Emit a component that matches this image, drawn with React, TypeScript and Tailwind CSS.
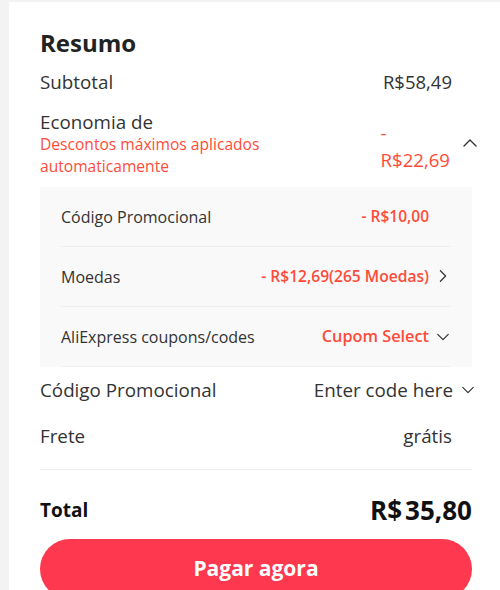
import React from "react";

const Chevron = ({ dir, className = "" }: { dir: "up" | "down" | "right"; className?: string }) => {
  const d =
    dir === "up" ? "M2 10l6-6 6 6" : dir === "down" ? "M2 5l6 6 6-6" : "M5 2l6 6-6 6";
  return (
    <svg className={className} viewBox="0 0 16 16" fill="none" stroke="currentColor" strokeWidth={1.4}>
      <path d={d} strokeLinecap="round" strokeLinejoin="round" />
    </svg>
  );
};

const App = () => {
  const promos = [
    { label: "Código Promocional", value: "- R$10,00", icon: null as null | "right" | "down", size: "text-[15.5px]" },
    { label: "Moedas", value: "- R$12,69(265 Moedas)", icon: "right" as const, size: "text-[15.6px]" },
    { label: "AliExpress coupons/codes", value: "Cupom Select", icon: "down" as const, size: "text-[16.3px]" },
  ];

  return (
    <div
      className="min-h-[590px] bg-[#f3f3f3] pl-[9px] pt-[2px] text-[#333]"
      style={{ fontFamily: '"Open Sans", Arial, sans-serif' }}
    >
      <div className="bg-white pl-[31px] pr-[28px] pt-[25px] pb-4">
        {/* Header */}
        <h2 className="text-[24px] leading-[32px] font-bold text-[#222]">Resumo</h2>

        <div className="flex h-[46px] items-center justify-between pr-[20px] text-[18.8px]">
          <span>Subtotal</span>
          <span className="text-[18.5px]">R$58,49</span>
        </div>

        {/* Economia */}
        <div className="mt-[6px] flex items-center justify-between">
          <div>
            <div className="text-[18.8px] leading-[22px]">Economia de</div>
            <div className="text-[15.6px] leading-[22px] text-[#ff4b3a]">
              Descontos máximos aplicados
              <br />
              automaticamente
            </div>
          </div>
          <div className="flex items-center">
            <div className="pt-[4px] text-[18.6px] leading-[27px] text-[#ff4b3a]">
              <div>-</div>
              <div>R$22,69</div>
            </div>
            <Chevron dir="up" className="ml-[12px] -mr-[6px] h-[16px] w-[16px]" />
          </div>
        </div>

        {/* Promo panel */}
        <div className="mt-[10px] bg-[#f9f9f9] px-[21px]">
          {promos.map((p) => (
            <div
              key={p.label}
              className="flex h-[60px] items-center justify-between border-b border-[#eeeeee] text-[16px]"
            >
              <span>{p.label}</span>
              <div className="flex items-center">
                <span className={`font-semibold text-[#ff4b3a] ${p.size}`}>{p.value}</span>
                <span className="ml-[6px] flex w-[16px] justify-center">
                  {p.icon && <Chevron dir={p.icon} className="h-[14px] w-[14px]" />}
                </span>
              </div>
            </div>
          ))}
        </div>

        <div className="flex h-[46px] items-center justify-between text-[18.8px]">
          <span>Código Promocional</span>
          <div className="flex items-center">
            <span>Enter code here</span>
            <Chevron dir="down" className="ml-[8px] -mr-[3px] h-[14px] w-[14px]" />
          </div>
        </div>

        <div className="flex h-[46px] items-center justify-between pr-[20px] text-[18.8px]">
          <span>Frete</span>
          <span>grátis</span>
        </div>

        <div className="mt-[10px] border-t border-[#eeeeee]" />

        <div className="mt-[11px] flex h-[58px] items-center justify-between text-[#111]">
          <span className="text-[19px] font-bold">Total</span>
          <span className="text-[26px] font-bold">
            R$<span className="ml-[3px]">35,80</span>
          </span>
        </div>

        <button className="h-[60px] w-full rounded-full bg-[#fd384f] text-[21px] font-bold text-white">
          Pagar agora
        </button>
      </div>
    </div>
  );
};

export default App;
